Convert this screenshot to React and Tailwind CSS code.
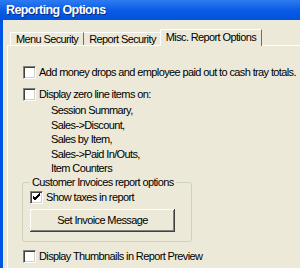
import React from "react";

const Check = ({ checked }) => (
  <span className="w-[13px] h-[13px] shrink-0 bg-white border border-t-[#808080] border-l-[#808080] border-r-white border-b-white shadow-[inset_1px_1px_0_#404040,inset_-1px_-1px_0_#d4d0c8] flex items-center justify-center">
    {checked ? (
      <svg width="9" height="9" viewBox="0 0 9 9">
        <path d="M1 3 L3 5 L8 0 M1 4 L3 6 L8 1 M1 5 L3 7 L8 2" stroke="#000" strokeWidth="1" fill="none" />
      </svg>
    ) : null}
  </span>
);

const Option = ({ label, checked, className }) => (
  <div className={`flex items-center gap-[3px] whitespace-nowrap ${className || ""}`}>
    <Check checked={checked} />
    <span className="leading-[13px] text-black">{label}</span>
  </div>
);

export default function App() {
  const items = [
    "Session Summary,",
    "Sales->Discount,",
    "Sales by Item,",
    "Sales->Paid In/Outs,",
    "Item Counters",
  ];

  return (
    <div className="w-[300px] h-[268px] bg-[#ECE9D8] flex flex-col overflow-hidden font-['Liberation_Sans',sans-serif] text-[11px] tracking-[-0.62px] text-black">
      {/* title bar */}
      <div className="h-[20px] shrink-0 bg-gradient-to-b from-[#2D7BF0] via-[#0A5CE6] to-[#0052DC] flex items-center pl-[6px]">
        <span className="text-white font-bold text-[12.5px] tracking-[-0.6px] whitespace-nowrap [text-shadow:1px_1px_0_#0A2A80]">
          Reporting Options
        </span>
      </div>

      <div className="flex-1 flex border-l-[3px] border-[#0055E5]">
        <div className="flex-1 flex flex-col pl-[4px] pt-[9px]">
          {/* tabs */}
          <div className="flex items-end h-[16px] pl-[3px] whitespace-nowrap">
            <div className="h-[13px] px-[5px] border-t border-l border-white border-r border-r-[#716F64] flex items-center">
              Menu Security
            </div>
            <div className="h-[13px] px-[5px] border-t border-white border-r border-r-[#716F64] flex items-center">
              Report Security
            </div>
            <div className="h-[17px] -ml-[2px] mb-[-1px] px-[5px] bg-[#ECE9D8] border-t border-l border-white border-r border-r-[#716F64] flex items-center relative z-10 pb-[2px]">
              Misc. Report Options
            </div>
          </div>

          {/* panel */}
          <div className="flex-1 border-t border-l border-white pl-[15px] pt-[20px]">
            <Option label="Add money drops and employee paid out to cash tray totals." />
            <Option label="Display zero line items on:" className="mt-[9px]" />
            <div className="pl-[28px] mt-[2px] flex flex-col leading-[14.5px] whitespace-nowrap">
              {items.map((t) => (
                <span key={t}>{t}</span>
              ))}
            </div>

            {/* group box */}
            <div className="relative w-[170px] h-[60px] mt-[6px] -ml-[1px] border border-[#D0D0BF] rounded-[3px] pl-[7px] pt-[7px]">
              <span className="absolute -top-[7px] left-[7px] px-[2px] bg-[#ECE9D8] leading-[13px] whitespace-nowrap">
                Customer Invoices report options
              </span>
              <Option label="Show taxes in report" checked className="mt-[1px]" />
              <button className="mt-[5px] w-[145px] h-[23px] bg-[#ECE9D8] shadow-[inset_-1px_-1px_0_#404040,inset_1px_1px_0_#fff,inset_-2px_-2px_0_#808080] flex items-center justify-center text-[11px] tracking-[-0.62px] whitespace-nowrap">
                Set Invoice Message
              </button>
            </div>

            <Option label="Display Thumbnails in Report Preview" className="mt-[8px]" />
          </div>
        </div>
      </div>
    </div>
  );
}
